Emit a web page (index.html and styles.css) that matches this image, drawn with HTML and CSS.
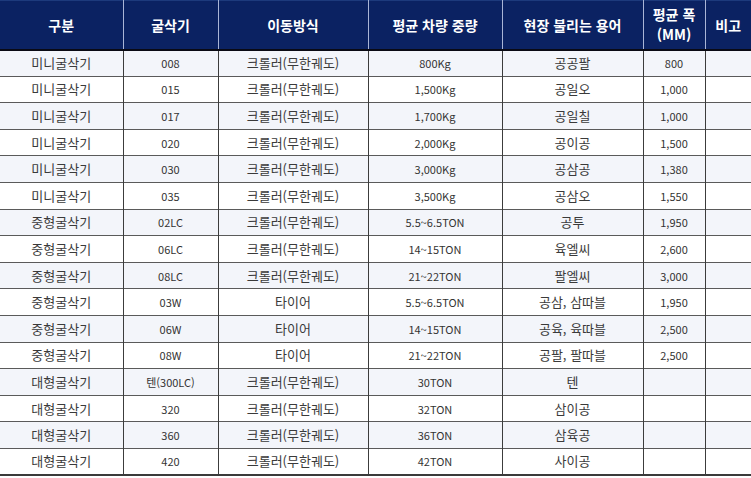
FILE: index.html
```html
<!DOCTYPE html>
<html lang="ko">
<head>
<meta charset="utf-8">
<title>굴삭기 표</title>
<link rel="stylesheet" href="styles.css">
</head>
<body>
<table class="spec">
  <colgroup>
    <col class="c1"><col class="c2"><col class="c3"><col class="c4"><col class="c5"><col class="c6"><col class="c7">
  </colgroup>
  <thead>
    <tr>
      <th>구분</th><th>굴삭기</th><th>이동방식</th><th>평균 차량 중량</th><th>현장 불리는 용어</th><th class="two"><span class="line">평균 폭</span><span class="line">(MM)</span></th><th>비고</th>
    </tr>
  </thead>
  <tbody>
    <tr><td class="ko">미니굴삭기</td><td class="num">008</td><td class="ko">크롤러(무한궤도)</td><td class="num">800Kg</td><td class="ko">공공팔</td><td class="num">800</td><td></td></tr>
    <tr><td class="ko">미니굴삭기</td><td class="num">015</td><td class="ko">크롤러(무한궤도)</td><td class="num">1,500Kg</td><td class="ko">공일오</td><td class="num">1,000</td><td></td></tr>
    <tr><td class="ko">미니굴삭기</td><td class="num">017</td><td class="ko">크롤러(무한궤도)</td><td class="num">1,700Kg</td><td class="ko">공일칠</td><td class="num">1,000</td><td></td></tr>
    <tr><td class="ko">미니굴삭기</td><td class="num">020</td><td class="ko">크롤러(무한궤도)</td><td class="num">2,000Kg</td><td class="ko">공이공</td><td class="num">1,500</td><td></td></tr>
    <tr><td class="ko">미니굴삭기</td><td class="num">030</td><td class="ko">크롤러(무한궤도)</td><td class="num">3,000Kg</td><td class="ko">공삼공</td><td class="num">1,380</td><td></td></tr>
    <tr><td class="ko">미니굴삭기</td><td class="num">035</td><td class="ko">크롤러(무한궤도)</td><td class="num">3,500Kg</td><td class="ko">공삼오</td><td class="num">1,550</td><td></td></tr>
    <tr><td class="ko">중형굴삭기</td><td class="num">02LC</td><td class="ko">크롤러(무한궤도)</td><td class="num">5.5~6.5TON</td><td class="ko">공투</td><td class="num">1,950</td><td></td></tr>
    <tr><td class="ko">중형굴삭기</td><td class="num">06LC</td><td class="ko">크롤러(무한궤도)</td><td class="num">14~15TON</td><td class="ko">육엘씨</td><td class="num">2,600</td><td></td></tr>
    <tr><td class="ko">중형굴삭기</td><td class="num">08LC</td><td class="ko">크롤러(무한궤도)</td><td class="num">21~22TON</td><td class="ko">팔엘씨</td><td class="num">3,000</td><td></td></tr>
    <tr><td class="ko">중형굴삭기</td><td class="num">03W</td><td class="ko">타이어</td><td class="num">5.5~6.5TON</td><td class="ko">공삼, 삼따블</td><td class="num">1,950</td><td></td></tr>
    <tr><td class="ko">중형굴삭기</td><td class="num">06W</td><td class="ko">타이어</td><td class="num">14~15TON</td><td class="ko">공육, 육따블</td><td class="num">2,500</td><td></td></tr>
    <tr><td class="ko">중형굴삭기</td><td class="num">08W</td><td class="ko">타이어</td><td class="num">21~22TON</td><td class="ko">공팔, 팔따블</td><td class="num">2,500</td><td></td></tr>
    <tr><td class="ko">대형굴삭기</td><td class="num">텐(300LC)</td><td class="ko">크롤러(무한궤도)</td><td class="num">30TON</td><td class="ko">텐</td><td class="num"></td><td></td></tr>
    <tr><td class="ko">대형굴삭기</td><td class="num">320</td><td class="ko">크롤러(무한궤도)</td><td class="num">32TON</td><td class="ko">삼이공</td><td class="num"></td><td></td></tr>
    <tr><td class="ko">대형굴삭기</td><td class="num">360</td><td class="ko">크롤러(무한궤도)</td><td class="num">36TON</td><td class="ko">삼육공</td><td class="num"></td><td></td></tr>
    <tr><td class="ko">대형굴삭기</td><td class="num">420</td><td class="ko">크롤러(무한궤도)</td><td class="num">42TON</td><td class="ko">사이공</td><td class="num"></td><td></td></tr>
  </tbody>
</table>
</body>
</html>
```
FILE: styles.css
```css
html, body {
  margin: 0;
  padding: 0;
  background: #ffffff;
}
body {
  width: 751px;
  height: 478px;
  overflow: hidden;
  font-family: "Noto Sans CJK KR", "Noto Sans", sans-serif;
  color: #333333;
}
.spec {
  width: 751px;
  border-collapse: collapse;
  table-layout: fixed;
}
.c1 { width: 123px; }
.c2 { width: 95px; }
.c3 { width: 150px; }
.c4 { width: 134px; }
.c5 { width: 141px; }
.c6 { width: 62px; }
.c7 { width: 46px; }

.spec thead tr {
  height: 49px;
  background: #0b2262;
  border-top: 1px solid #1d3a7c;
  border-bottom: 2px solid #0a0a14;
}
.spec th {
  color: #ffffff;
  font-weight: 700;
  font-size: 14px;
  line-height: 18px;
  text-align: center;
  vertical-align: middle;
  padding: 0;
  border-right: 1px solid #a9b5d6;
}
.spec th.two {
  padding-bottom: 1px;
}
.spec th .line {
  display: block;
  line-height: 20px;
}
.spec th:last-child { border-right: none; }

.spec tbody tr {
  height: 26.6px;
  border-bottom: 1px solid #5a5a5a;
}
.spec tbody tr:nth-child(odd) { background: #f3f5fa; }
.spec tbody tr:nth-child(even) { background: #ffffff; }
.spec tbody tr:last-child { border-bottom: 2px solid #3a3a3a; }

.spec td {
  padding: 0;
  text-align: center;
  vertical-align: middle;
  border-right: 1px solid #3c3c3c;
  white-space: nowrap;
}
.spec td:last-child { border-right: none; }
.ko {
  font-size: 13px;
  line-height: 16px;
  color: #3a3a3a;
}
.num {
  font-size: 11px;
  line-height: 14px;
  color: #333333;
}
```
